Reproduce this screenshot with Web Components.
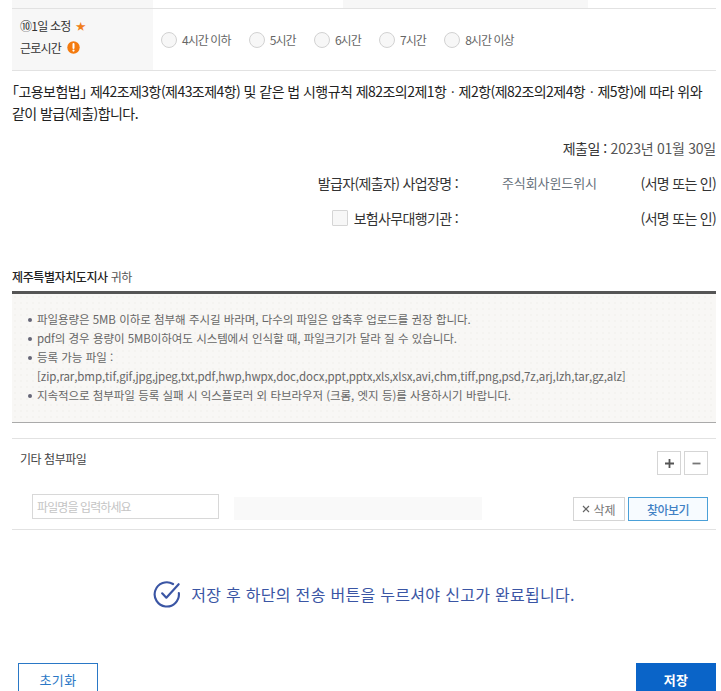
<!DOCTYPE html>
<html lang="ko">
<head>
<meta charset="utf-8">
<title>신고서</title>
<style>
html,body{margin:0;padding:0;background:#fff;overflow:hidden;height:691px}
body{font-family:"Noto Sans CJK KR","Noto Sans",sans-serif;color:#333;font-size:12px}
b{font-weight:500;color:#222}
</style>
</head>
<body>
<app-page>
  <top-strip></top-strip>
  <hours-row>
    <radio-option>4시간 이하</radio-option>
    <radio-option>5시간</radio-option>
    <radio-option>6시간</radio-option>
    <radio-option>7시간</radio-option>
    <radio-option>8시간 이상</radio-option>
  </hours-row>
  <legal-text>
    <p>「고용보험법」 제42조제3항(제43조제4항) 및 같은 법 시행규칙 제82조의2제1항ㆍ제2항(제82조의2제4항ㆍ제5항)에 따라 위와 같이 발급(제출)합니다.</p>
  </legal-text>
  <sign-block></sign-block>
  <notice-box>
    <span slot="title"><b>제주특별자치도지사</b> 귀하</span>
    <li>파일용량은 5MB 이하로 첨부해 주시길 바라며, 다수의 파일은 압축후 업로드를 권장 합니다.</li>
    <li>pdf의 경우 용량이 5MB이하여도 시스템에서 인식할 때, 파일크기가 달라 질 수 있습니다.</li>
    <li>등록 가능 파일 :<br>[zip,rar,bmp,tif,gif,jpg,jpeg,txt,pdf,hwp,hwpx,doc,docx,ppt,pptx,xls,xlsx,avi,chm,tiff,png,psd,7z,arj,lzh,tar,gz,alz]</li>
    <li>지속적으로 첨부파일 등록 실패 시 익스플로러 외 타브라우저 (크롬, 엣지 등)를 사용하시기 바랍니다.</li>
  </notice-box>
  <attach-section></attach-section>
  <done-message>저장 후 하단의 전송 버튼을 누르셔야 신고가 완료됩니다.</done-message>
  <action-bar></action-bar>
</app-page>
<script>
function def(name, css, html){
  customElements.define(name, class extends HTMLElement{
    constructor(){
      super();
      const r=this.attachShadow({mode:'open'});
      r.innerHTML='<style>'+css+'</style>'+html;
    }
  });
}
def('app-page',`:host{display:block;padding:0 5px 0 12px;width:704px;height:691px;overflow:hidden}`,`<slot></slot>`);
def('top-strip',`:host{display:grid;grid-template-columns:141px 190px 245px 1fr;height:8px;border-bottom:1px solid #e2e2e2;box-sizing:content-box}
 i{display:block}.g{background:#f7f7f7}`,`<i class="g"></i><i></i><i class="g"></i><i></i>`);
def('hours-row',`:host{display:flex;height:61px;border-bottom:1px solid #e2e2e2;box-sizing:content-box}
 .l{width:133px;padding:0 0 6px 8px;box-sizing:content-box;background:#f7f7f7;display:flex;flex-direction:column;justify-content:center;font-size:12px;line-height:22px;color:#333;letter-spacing:-.75px}
 .l div{display:flex;align-items:center;height:22px}
 .star{color:#f07f1b;margin-left:5px;font-size:10px;letter-spacing:0}
 .bang{display:inline-flex;margin-left:6px}
 .r{display:flex;align-items:center;padding-left:8px;gap:18.25px}`,
 `<div class="l"><div>⑩1일 소정<span class="star">★</span></div><div>근로시간<span class="bang"><svg width="13" height="13" viewBox="0 0 13 13"><circle cx="6.5" cy="6.5" r="6.2" fill="#f47b0f"/><path d="M6.5 3v4" stroke="#fff" stroke-width="2" stroke-linecap="round"/><circle cx="6.5" cy="9.6" r="1.1" fill="#fff"/></svg></span></div></div><div class="r"><slot></slot></div>`);
def('radio-option',`:host{display:inline-flex;align-items:center;font-size:12px;color:#666;gap:5px;letter-spacing:-.95px}
 i{display:block;width:14px;height:14px;border:1px solid #d2d2d2;border-radius:50%;background:#f7f7f7}`,`<i></i><slot></slot>`);
def('legal-text',`:host{display:block;font-size:14px;line-height:22px;color:#222;padding-top:9px;letter-spacing:-.55px;font-feature-settings:"halt"}
 ::slotted(p){margin:0}`,`<slot></slot>`);
def('sign-block',`:host{display:block;font-size:14px;color:#333;padding-top:13px;line-height:22px}
 .date{display:flex;justify-content:flex-end;gap:4px;height:22px;letter-spacing:-.5px}
 .date span{color:#555;letter-spacing:-.25px}
 .row{display:flex;align-items:center;justify-content:flex-end;height:22px;margin-top:13px;letter-spacing:-.65px}
 .k{display:flex;align-items:center}
 .v{width:182px;padding-left:44px;box-sizing:border-box;font-size:13px;color:#66707a;white-space:nowrap;letter-spacing:-.1px}
 .c{width:76px;text-align:right;white-space:nowrap;letter-spacing:-.7px}
 .box{width:14px;height:14px;border:1px solid #d5d5d5;background:#f7f7f7;margin-right:6px;border-radius:1px}`,
 `<div class="date">제출일 : <span>2023년 01월 30일</span></div>
 <div class="row"><div class="k">발급자(제출자) 사업장명 :</div><div class="v">주식회사윈드위시</div><div class="c">(서명 또는 인)</div></div>
 <div class="row"><div class="k"><i class="box"></i>보험사무대행기관 :</div><div class="v"></div><div class="c">(서명 또는 인)</div></div>`);
def('notice-box',`:host{display:block;padding-top:39px}
 .t{font-size:12px;line-height:18px;color:#555;height:23px;letter-spacing:-.4px}
 .b{border-top:3px solid #555;border-bottom:1px solid #aaa;padding:16px 0 0 13px;box-sizing:border-box;height:132px;
   background-color:#f8f7f5;background-image:radial-gradient(#f4f3f0 1px,transparent 1px);background-size:6px 6px}
 ul{margin:0;padding:0;list-style:none;font-size:11.5px;line-height:19px;color:#666;letter-spacing:-.09px;word-spacing:.25px}
 ::slotted(span){display:block}
 ::slotted(li){margin:0;padding:0 0 0 12px;white-space:nowrap;list-style:none}
 ::slotted(li)::before{content:"";display:inline-block;width:4px;height:4px;border-radius:50%;background:#667;margin:0 5px 2px -9px;vertical-align:middle}`,
 `<div class="t"><slot name="title"></slot></div><div class="b"><ul><slot></slot></ul></div>`);
def('attach-section',`:host{display:block;margin-top:15px;border-top:1px solid #e2e2e2;border-bottom:1px solid #e2e2e2;height:90px;font-size:12px;color:#444}
 .h{display:flex;justify-content:space-between;height:55px;padding:0 8px;box-sizing:border-box}
 .h .n{padding-top:11px;line-height:18px;letter-spacing:-.45px}
 .pm{display:flex;gap:3px;padding-top:12px}
 .pm i{display:flex;align-items:center;justify-content:center;width:22px;height:22px;border:1px solid #d5d5d5;background:#fff}
 .f{display:flex;align-items:flex-start;padding-left:20px}
 .inp{height:23px;border:1px solid #d8d8d8;font-size:12px;color:#c4c4c4;line-height:23px;padding-left:4px;width:181px;letter-spacing:-.9px}
 .gray{width:248px;height:23px;background:#f9f9f9;margin:3px 0 0 15px}
 .del{width:50px;height:22px;border:1px solid #d5d5d5;margin:3px 0 0 91px;display:flex;align-items:center;justify-content:center;color:#777;font-size:12px;gap:3px}
 .find{width:78px;height:22px;border:1px solid #4aa0d8;background:#f7fbff;margin:3px 0 0 3px;display:flex;align-items:center;justify-content:center;color:#3f80c4;font-size:12px;font-weight:500;letter-spacing:-.5px}`,
 `<div class="h"><div class="n">기타 첨부파일</div><div class="pm"><i><svg width="11" height="11" viewBox="0 0 11 11"><path d="M5.5 1v9M1 5.500h9" stroke="#555" stroke-width="1.800"/></svg></i><i><svg width="11" height="11" viewBox="0 0 11 11"><path d="M1.500 5.500h8" stroke="#777" stroke-width="1.800"/></svg></i></div></div>
 <div class="f"><div class="inp">파일명을 입력하세요</div><div class="gray"></div><div class="del"><svg width="8" height="8" viewBox="0 0 8 8"><path d="M1 1l6 6M7 1l-6 6" stroke="#666" stroke-width="1.200"/></svg>삭제</div><div class="find">찾아보기</div></div>`);
def('done-message',`:host{display:flex;align-items:center;justify-content:center;gap:10px;margin-top:46px;height:36px;color:#3a55a4;font-size:16px;font-weight:400;letter-spacing:.3px}`,
 `<svg width="28" height="28" viewBox="0 0 30 30" fill="none" stroke="#3a55a4" stroke-width="2.300" stroke-linecap="round" stroke-linejoin="round"><path d="M21.500 4.300A13 13 0 1 0 27.700 14"/><path d="M9.800 14.300l4.500 4.700L27.500 4.500"/></svg><span><slot></slot></span>`);
def('action-bar',`:host{display:flex;justify-content:space-between;margin-top:51px;padding-left:6px}
 .b{display:flex;align-items:center;justify-content:center;width:80px;height:32px;box-sizing:border-box;font-size:13px;letter-spacing:.3px}
 .o{border:1px solid #2a78c6;color:#2a78c6;background:#fff}
 .p{background:#0a64c8;color:#fff;font-weight:700}`,`<div class="b o">초기화</div><div class="b p">저장</div>`);
</script>
</body>
</html>
